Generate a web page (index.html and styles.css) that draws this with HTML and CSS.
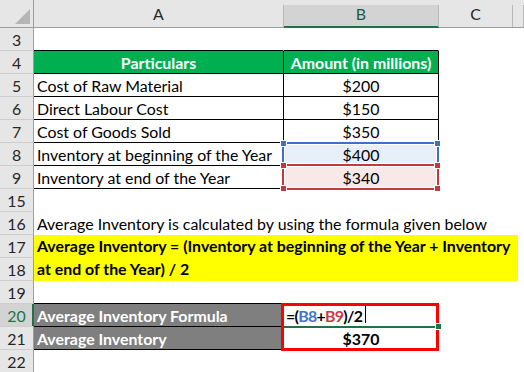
FILE: index.html
```html
<!DOCTYPE html>
<html lang="en">
<head>
<meta charset="utf-8">
<title>Average Inventory</title>
<link rel="stylesheet" href="styles.css">
</head>
<body>
<div class="sheet">
  <div class="hd corner"><span class="hin"><svg class="tri" width="34" height="28" viewBox="0 0 34 28"><polygon points="15,24 30,24 30,9" fill="#b5b5b5"/></svg></span></div>
  <div class="hd"><span class="hin">A</span></div>
  <div class="hd sel"><span class="hin">B</span></div>
  <div class="hd"><span class="hin">C</span></div>
  <div class="hd"><span class="hin"></span></div>

  <div class="rh">3</div><div class="c bb"></div><div class="c bb"></div><div class="c"></div><div class="c"></div>

  <div class="rh">4</div><div class="c bb br green ctr">Particulars</div><div class="c bb br green ctr">Amount (in millions)</div><div class="c"></div><div class="c"></div>

  <div class="rh">5</div><div class="c bb br">Cost of Raw Material</div><div class="c bb br ctr">$200</div><div class="c"></div><div class="c"></div>
  <div class="rh">6</div><div class="c bb br">Direct Labour Cost</div><div class="c bb br ctr">$150</div><div class="c"></div><div class="c"></div>
  <div class="rh">7</div><div class="c bb br">Cost of Goods Sold</div><div class="c bb br ctr">$350</div><div class="c"></div><div class="c"></div>
  <div class="rh">8</div><div class="c bb br">Inventory at beginning of the Year</div><div class="c bb br ctr fill-blue">$400</div><div class="c"></div><div class="c"></div>
  <div class="rh">9</div><div class="c bb br">Inventory at end of the Year</div><div class="c bb br ctr fill-red">$340</div><div class="c"></div><div class="c"></div>

  <div class="rh">15</div><div class="c"></div><div class="c"></div><div class="c"></div><div class="c"></div>

  <div class="rh">16</div><div class="c span3">Average Inventory is calculated by using the formula given below</div><div class="c"></div>

  <div class="rh">17</div>
  <div class="note">
    <span class="note-line">Average Inventory = (Inventory at beginning of the Year + Inventory</span>
    <span class="note-line">at end of the Year) / 2</span>
  </div>
  <div class="rh">18</div>

  <div class="rh">19</div><div class="c bb"></div><div class="c bb"></div><div class="c"></div><div class="c"></div>

  <div class="rh active">20</div><div class="c bb br grey">Average Inventory Formula</div><div class="c bb br formula"><span class="ftext">=(<span class="ref-blue">B8</span>+<span class="ref-red">B9</span>)/2</span><span class="caret"></span></div><div class="c"></div><div class="c"></div>
  <div class="rh">21</div><div class="c bb br grey">Average Inventory</div><div class="c bb br ctr bold">$370</div><div class="c"></div><div class="c"></div>
  <div class="rh">22</div><div class="c"></div><div class="c"></div><div class="c"></div><div class="c"></div>

  <div class="refbox blue-box"><i class="h tl"></i><i class="h tr"></i></div>
  <div class="refbox red-box"><i class="h tl"></i><i class="h tr"></i><i class="h bl"></i><i class="h br2"></i></div>

  <div class="active-line"></div>
  <div class="out-box"></div>
  <div class="fill-handle"></div>
</div>
</body>
</html>
```
FILE: styles.css
```css
* { box-sizing: border-box; }
html, body { margin: 0; padding: 0; background: #fff; }
body {
  font-family: "Lato", "Noto Sans", sans-serif;
  font-size: 15.9px;
  color: #000;
  overflow: hidden;
}
.sheet {
  position: relative;
  display: grid;
  grid-template-columns: 34px 250px 155px 74px 11px;
  grid-template-rows: 28px repeat(15, 23px);
  width: 524px;
  height: 372px;
  overflow: hidden;
}

/* column headers */
.hd {
  background: #e6e6e6;
  border-bottom: 1px solid #9d9d9d;
  padding-top: 5px;
  color: #262626;
}
.hin {
  display: block;
  height: 100%;
  border-right: 1px solid #b9b9b9;
  text-align: center;
  line-height: 18px;
}
.corner { padding-top: 0; }
.corner .hin { border-right: 1px solid #9d9d9d; }
.tri { display: block; }
.hd.sel { border-bottom-color: #217346; }
.hd.sel .hin {
  background: #d3d3d3;
  box-shadow: inset 0 -1px 0 #217346;
  color: #1e5d3b;
}

/* row headers */
.rh {
  background: #e6e6e6;
  border-right: 1px solid #9d9d9d;
  border-bottom: 1px solid #cdcdcd;
  text-align: center;
  line-height: 22px;
  padding-top: 1px;
  color: #262626;
}
.rh.active {
  background: #d3d3d3;
  color: #217346;
  border-right-color: #217346;
  box-shadow: inset -1px 0 0 #217346;
}

/* cells */
.c {
  border-right: 1px solid transparent;
  border-bottom: 1px solid transparent;
  line-height: 22px;
  padding: 1px 3px 0;
  white-space: nowrap;
}
.bb { border-bottom-color: #000; }
.br { border-right-color: #000; }
.ctr { text-align: center; }
.bold { font-weight: 700; }
.green { background: #00b050; color: #fff; font-weight: 700; }
.grey { background: #7f7f7f; color: #fff; font-weight: 700; }
.fill-blue { background: #e8eff9; }
.fill-red { background: #f9e8e8; }
.span3 { grid-column: span 3; overflow: visible; }

.formula { font-weight: 700; padding-left: 2px; }
.ftext { letter-spacing: -0.7px; }
.ref-blue { color: #3c74cf; }
.ref-red { color: #c9393f; }
.caret {
  display: inline-block;
  width: 1px;
  height: 18px;
  margin-left: 3px;
  vertical-align: -1px;
  background: #000;
}

/* yellow merged note */
.note {
  grid-column: 2 / span 4;
  grid-row: span 2;
  width: 484px;
  background: #ffff00;
  font-weight: 700;
  padding-left: 3px;
}
.note-line {
  display: block;
  height: 23px;
  line-height: 22px;
  white-space: nowrap;
}

/* reference highlight boxes */
.refbox {
  position: absolute;
  left: 282px;
  width: 157px;
  border: 2px solid;
  box-shadow: inset 0 0 0 1px #fff;
}
.blue-box { top: 142px; height: 24px; border-color: #3e70c8; color: #3e70c8; }
.red-box { top: 164px; height: 26px; border-color: #c5373e; color: #c5373e; }
.h {
  position: absolute;
  width: 5px;
  height: 5px;
  background: currentColor;
  outline: 1px solid #fff;
}
.h.tl { left: -3px; top: -3px; }
.h.tr { right: -3px; top: -3px; }
.h.bl { left: -3px; bottom: -3px; }
.h.br2 { right: -3px; bottom: -3px; }

.active-line {
  position: absolute;
  left: 282px;
  top: 326px;
  width: 156px;
  height: 2px;
  background: #217346;
}
.out-box {
  position: absolute;
  left: 281px;
  top: 303px;
  width: 158px;
  height: 48px;
  border: 3px solid #ff0000;
}
.fill-handle {
  position: absolute;
  left: 436px;
  top: 324px;
  width: 5px;
  height: 5px;
  background: #217346;
  outline: 1px solid #fff;
}
```
